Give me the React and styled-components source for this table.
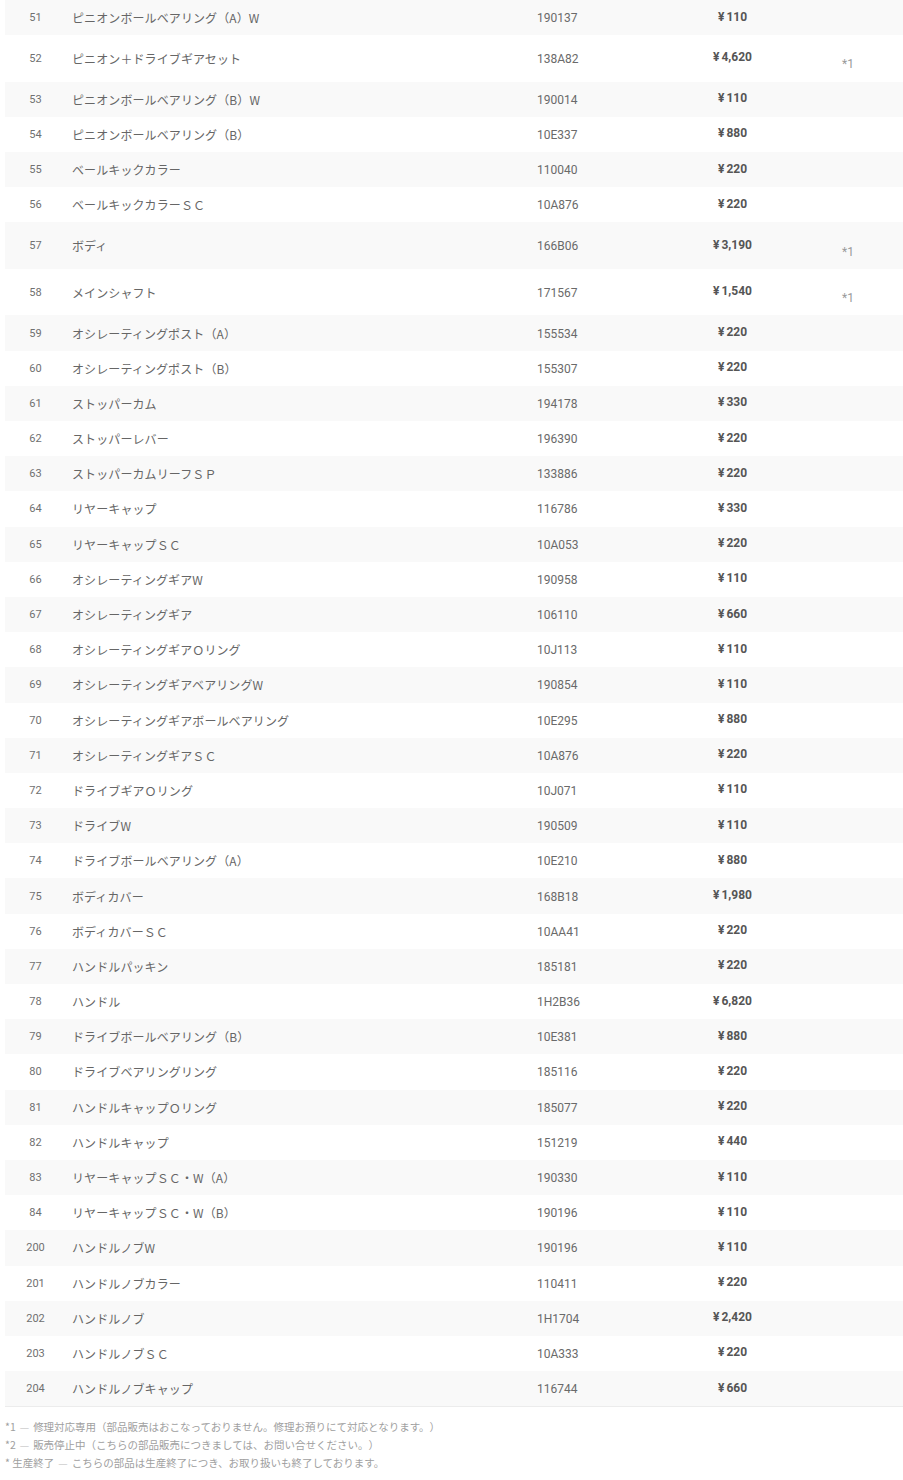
import React from "react";
import styled, { createGlobalStyle } from "styled-components";

const GlobalStyle = createGlobalStyle`
  body {
    margin: 0;
    background: #fff;
    font-family: Roboto, "Noto Sans CJK JP", sans-serif;
  }
`;

const Wrapper = styled.div`
  padding-left: 5px;
  width: 898px;
`;

const Table = styled.div`
  display: flex;
  flex-direction: column;
  border-bottom: 1px solid #ececec;
`;

const Row = styled.div`
  display: grid;
  grid-template-columns: 60px 465px 130px 145px 1fr;
  align-items: center;
  height: ${(p) => (p.$tall ? "46.5px" : "35.2px")};
  background: ${(p) => (p.$shaded ? "#f9f9f9" : "#fff")};
`;

const Num = styled.div`
  text-align: center;
  font-family: Roboto, sans-serif;
  font-size: 11px;
  color: #707070;
  padding-left: 1px;
`;

const Name = styled.div`
  padding-left: 7px;
  font-family: "Noto Sans CJK JP", sans-serif;
  font-size: 12px;
  letter-spacing: 0.1px;
  text-spacing-trim: space-all;
  color: #666;
  white-space: nowrap;
`;

const Code = styled.div`
  padding-left: 7px;
  font-family: Roboto, sans-serif;
  font-size: 12px;
  color: #6a6a6a;
  padding-top: 1px;
`;

const Price = styled.div`
  text-align: center;
  font-family: Roboto, "Noto Sans CJK JP", sans-serif;
  font-size: 12px;
  font-weight: 700;
  color: #555;
  margin-top: -2px;
`;

const Yen = styled.span`
  margin-right: 2px;
`;

const Note = styled.div`
  padding-left: 37px;
  padding-top: 12px;
  font-family: Roboto, sans-serif;
  font-size: 12px;
  color: #9a9a9a;
`;

const Footnotes = styled.div`
  margin-top: 11px;
  font-family: "Noto Sans CJK JP", sans-serif;
  font-size: 10.5px;
  line-height: 18px;
  text-spacing-trim: space-all;
  color: #a0a0a0;
`;

const Dash = styled.span`
  color: #cfcfcf;
  margin: 0 4px;
`;

const parts = [
  ["51", "ピニオンボールベアリング（A）W", "190137", "110"],
  ["52", "ピニオン＋ドライブギアセット", "138A82", "4,620", "*1"],
  ["53", "ピニオンボールベアリング（B）W", "190014", "110"],
  ["54", "ピニオンボールベアリング（B）", "10E337", "880"],
  ["55", "ベールキックカラー", "110040", "220"],
  ["56", "ベールキックカラーＳＣ", "10A876", "220"],
  ["57", "ボディ", "166B06", "3,190", "*1"],
  ["58", "メインシャフト", "171567", "1,540", "*1"],
  ["59", "オシレーティングポスト（A）", "155534", "220"],
  ["60", "オシレーティングポスト（B）", "155307", "220"],
  ["61", "ストッパーカム", "194178", "330"],
  ["62", "ストッパーレバー", "196390", "220"],
  ["63", "ストッパーカムリーフＳＰ", "133886", "220"],
  ["64", "リヤーキャップ", "116786", "330"],
  ["65", "リヤーキャップＳＣ", "10A053", "220"],
  ["66", "オシレーティングギアW", "190958", "110"],
  ["67", "オシレーティングギア", "106110", "660"],
  ["68", "オシレーティングギアＯリング", "10J113", "110"],
  ["69", "オシレーティングギアベアリングW", "190854", "110"],
  ["70", "オシレーティングギアボールベアリング", "10E295", "880"],
  ["71", "オシレーティングギアＳＣ", "10A876", "220"],
  ["72", "ドライブギアＯリング", "10J071", "110"],
  ["73", "ドライブW", "190509", "110"],
  ["74", "ドライブボールベアリング（A）", "10E210", "880"],
  ["75", "ボディカバー", "168B18", "1,980"],
  ["76", "ボディカバーＳＣ", "10AA41", "220"],
  ["77", "ハンドルパッキン", "185181", "220"],
  ["78", "ハンドル", "1H2B36", "6,820"],
  ["79", "ドライブボールベアリング（B）", "10E381", "880"],
  ["80", "ドライブベアリングリング", "185116", "220"],
  ["81", "ハンドルキャップＯリング", "185077", "220"],
  ["82", "ハンドルキャップ", "151219", "440"],
  ["83", "リヤーキャップＳＣ・W（A）", "190330", "110"],
  ["84", "リヤーキャップＳＣ・W（B）", "190196", "110"],
  ["200", "ハンドルノブW", "190196", "110"],
  ["201", "ハンドルノブカラー", "110411", "220"],
  ["202", "ハンドルノブ", "1H1704", "2,420"],
  ["203", "ハンドルノブＳＣ", "10A333", "220"],
  ["204", "ハンドルノブキャップ", "116744", "660"],
];

function App() {
  return (
    <Wrapper>
      <GlobalStyle />
      <Table>
        {parts.map(([no, name, code, price, note], i) => (
          <Row key={no} $shaded={i % 2 === 0} $tall={!!note}>
            <Num>{no}</Num>
            <Name>{name}</Name>
            <Code>{code}</Code>
            <Price>
              <Yen>¥</Yen>
              {price}
            </Price>
            {note ? <Note>{note}</Note> : <div />}
          </Row>
        ))}
      </Table>
      <Footnotes>
        <div>
          *1<Dash>—</Dash>修理対応専用（部品販売はおこなっておりません。修理お預りにて対応となります。）
        </div>
        <div>
          *2<Dash>—</Dash>販売停止中（こちらの部品販売につきましては、お問い合せください。）
        </div>
        <div>
          * 生産終了<Dash>—</Dash>こちらの部品は生産終了につき、お取り扱いも終了しております。
        </div>
      </Footnotes>
    </Wrapper>
  );
}

export default App;
